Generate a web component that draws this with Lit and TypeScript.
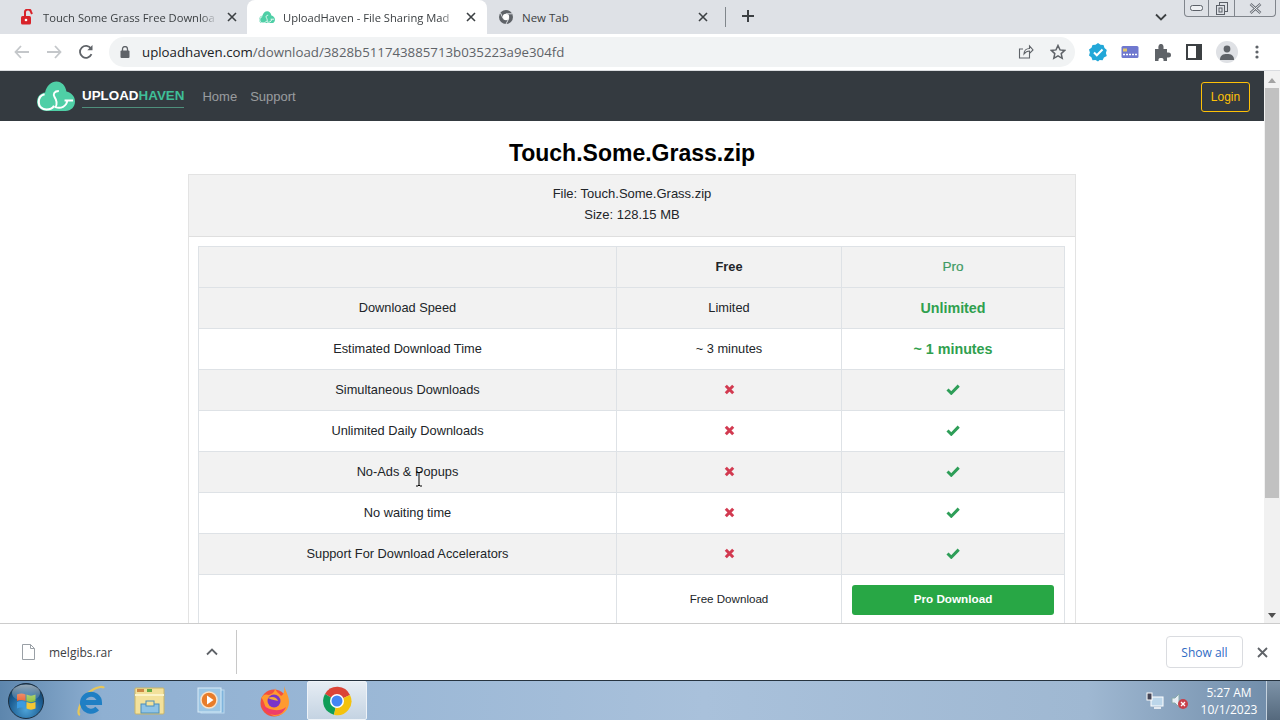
import { LitElement, html, css } from "lit";
import { customElement } from "lit/decorators.js";

const closeIcon = html`<svg width="10" height="10" viewBox="0 0 10 10"><path d="M1 1l8 8M9 1l-8 8" stroke="#3c4043" stroke-width="1.6" fill="none"/></svg>`;

const cloud = (size: number) => html`<svg width=${size} height=${size * 0.8} viewBox="0 0 40 32">
  <path fill="#4fcfa6" d="M10 31.500C4 31.500 0 27 0 22C0 16 4 12.500 8.500 12C10 5 15 .5 20.500 .5C26 .5 30 5 31 11C36 12 40 16 40 21.500C40 27 36 31.500 30 31.500Z"/>
  <path d="M8 14C3.500 15 1.800 19 1.800 22.500C1.800 27 5.500 30 10 30C14 30 16.500 28.500 18 26" stroke="#fff" stroke-width="2.300" fill="none"/>
  <path d="M23 10.500C18 10.500 16.500 14 18.500 17C20.500 20 21.500 24 19.500 27.500C25 29.500 31 27 32 20.500M29 20.500H38" stroke="#fff" stroke-width="2" fill="none"/>
</svg>`;

const xMark = html`<svg class="mark" width="11" height="11" viewBox="0 0 11 11"><path d="M1.800 1.800l7.400 7.400M9.200 1.800L1.800 9.200" stroke="#d23a50" stroke-width="3" fill="none"/></svg>`;
const checkMark = html`<svg class="mark" width="14" height="11" viewBox="0 0 14 11"><path d="M1.500 5.500l3.800 3.700L12.700 1.600" stroke="#2e9e58" stroke-width="3" fill="none"/></svg>`;

const rows: [string, boolean][] = [
  ["Simultaneous Downloads", true],
  ["Unlimited Daily Downloads", false],
  ["No-Ads & Popups", true],
  ["No waiting time", false],
  ["Support For Download Accelerators", true],
];

@customElement("browser-chrome")
export class BrowserChrome extends LitElement {
  static styles = css`
    :host { display: block; font-family: "Open Sans", "Noto Sans", sans-serif; }
    .strip { height: 34px; background: #dee1e6; display: flex; padding-left: 8px; position: relative; }
    .tab { width: 239px; height: 34px; display: flex; align-items: center; padding: 0 10px 0 12px; box-sizing: border-box; gap: 9px; font-size: 11.200px; color: #3c4043; flex: none; }
    .tab.active { background: #fff; border-radius: 8px 8px 0 0; width: 240px; padding: 0 11px 0 12px; gap: 8px; }
    .tab.plain { width: 232px; padding: 0 11px 0 11px; gap: 8px; font-size: 11.500px; }
    .title { flex: 1; white-space: nowrap; }
    .fade { -webkit-mask-image: linear-gradient(90deg, #000 90%, transparent); mask-image: linear-gradient(90deg, #000 90%, transparent); }
    .sep { width: 1px; height: 20px; background: #80868b; margin: 7px 0 0 6px; }
    .plus { margin: 9px 0 0 15px; }
    .chev { position: absolute; left: 1155px; top: 13px; }
    .winctl { position: absolute; left: 1184px; top: 0; width: 92px; height: 17px; border: 1px solid #80858c; border-top: 0; border-radius: 0 0 4px 4px; box-sizing: border-box; display: flex; }
    .winctl div { display: flex; align-items: center; justify-content: center; }
    .min { width: 23px; border-right: 1px solid #80858c; }
    .restore { width: 25px; border-right: 1px solid #80858c; }
    .shut { flex: 1; }
    .tools { height: 37px; background: #fff; border-bottom: 1px solid #dadce0; box-sizing: border-box; display: flex; align-items: center; padding-left: 13px; }
    .nav-btn { width: 32px; display: flex; justify-content: flex-start; }
    .reload { width: 23px; padding-left: 1px; box-sizing: border-box; }
    .omni { margin-left: 9px; width: 966px; height: 30px; border-radius: 15px; background: #f1f3f4; display: flex; align-items: center; padding: 0 9px 0 11px; box-sizing: border-box; font-size: 13.250px; color: #5f6368; }
    .omni b { font-weight: 400; color: #202124; }
    .url { margin-left: 12px; flex: 1; white-space: nowrap; }
    .omni svg:last-child { margin-left: 16px; }
    .exts { display: flex; align-items: center; margin-left: 13px; gap: 12px; }
    .exts > * { flex: none; }
    .avatar { width: 22px; height: 22px; border-radius: 50%; background: #dfe1e5; display: flex; align-items: center; justify-content: center; }
  `;

  render() {
    return html`
      <div class="strip">
        <div class="tab">
          <svg width="14" height="16" viewBox="0 0 14 16"><rect x="1" y="7" width="10" height="8.500" rx="1.500" fill="#d8232a"/><path d="M5 7V4a3 3 0 0 1 6 -1l1 2" stroke="#d8232a" stroke-width="2" fill="none"/><circle cx="6" cy="11" r="1.300" fill="#fff"/></svg>
          <span class="title fade">Touch Some Grass Free Downloa</span>${closeIcon}
        </div>
        <div class="tab active">
          ${cloud(16)}
          <span class="title fade">UploadHaven - File Sharing Mad</span>${closeIcon}
        </div>
        <div class="tab plain">
          <svg width="16" height="16" viewBox="0 0 16 16"><circle cx="8" cy="8" r="7" fill="#5f6368"/><circle cx="8" cy="8" r="3.200" fill="#fff"/><path d="M8 4.800h6M5.200 9.600L2.500 4M10.800 9.600L8 15" stroke="#dee1e6" stroke-width="1"/></svg>
          <span class="title">New Tab</span>${closeIcon}
        </div>
        <div class="sep"></div>
        <svg class="plus" width="14" height="14" viewBox="0 0 14 14"><path d="M7 1v12M1 7h12" stroke="#3c4043" stroke-width="2"/></svg>
        <svg class="chev" width="12" height="8" viewBox="0 0 12 8"><path d="M1 1.500l5 5 5-5" stroke="#3c4043" stroke-width="1.800" fill="none"/></svg>
        <div class="winctl">
          <div class="min"><svg width="13" height="6"><rect x=".5" y=".5" width="12" height="5" rx="2" fill="#eef0f3" stroke="#5b6068"/></svg></div>
          <div class="restore"><svg width="12" height="13"><rect x="3.500" y=".5" width="8" height="9" fill="none" stroke="#5b6068"/><rect x=".5" y="3.500" width="8" height="9" fill="#dee1e6" stroke="#5b6068"/><rect x="3" y="6" width="3" height="4" fill="none" stroke="#5b6068"/></svg></div>
          <div class="shut"><svg width="13" height="11"><path d="M1.500 1l10 9M11.500 1l-10 9" stroke="#6a6f77" stroke-width="2.600" fill="none"/><path d="M1.500 1l10 9M11.500 1l-10 9" stroke="#eef0f3" stroke-width="1" fill="none"/></svg></div>
        </div>
      </div>
      <div class="tools">
        <div class="nav-btn"><svg width="18" height="16" viewBox="0 0 18 16"><path d="M16 8H3M8 2L2.500 8 8 14" stroke="#c4c7ca" stroke-width="1.800" fill="none"/></svg></div>
        <div class="nav-btn"><svg width="18" height="16" viewBox="0 0 18 16"><path d="M2 8h13M10 2l5.500 6L10 14" stroke="#c4c7ca" stroke-width="1.800" fill="none"/></svg></div>
        <div class="nav-btn reload"><svg width="16" height="16" viewBox="0 0 16 16"><path d="M13.500 10.200A6 6 0 1 1 13 4.500" stroke="#5f6368" stroke-width="1.800" fill="none"/><path d="M14.500 1v5.200H9.300z" fill="#5f6368"/></svg></div>
        <div class="omni">
          <svg width="10" height="12" viewBox="0 0 10 12"><rect x="0.500" y="4.500" width="9" height="7.500" rx="1" fill="#5f6368"/><path d="M2.500 5V3a2.500 2.500 0 0 1 5 0v2" stroke="#5f6368" stroke-width="1.300" fill="none"/></svg>
          <span class="url"><b>uploadhaven.com</b>/download/3828b511743885713b035223a9e304fd</span>
          <svg width="16" height="16" viewBox="0 0 16 16"><path d="M11.500 9.500v4.500H1.500V5H5M6 10c0-3.500 2.500-5.500 5.500-5.500V2L15 6l-3.500 3.500V7C9 7 7.500 8 6 10z" stroke="#5f6368" stroke-width="1.100" fill="none"/></svg>
          <svg width="16" height="16" viewBox="0 0 16 16"><path d="M8 1.500l2 4.400 4.700.5-3.500 3.200 1 4.700L8 11.900l-4.200 2.400 1-4.700L1.300 6.400 6 5.900z" stroke="#5f6368" stroke-width="1.500" fill="none"/></svg>
        </div>
        <div class="exts">
          <svg width="20" height="20" viewBox="0 0 20 20"><path d="M10 1l2.500 1.800 3 .2 1 2.900 2.300 2-.9 3 .9 3-2.900 1.500-1.300 2.800-3-.3L10 19.500 7.500 18l-3 .2L3.400 15.300 1 13.500 1.900 10.500 1 7.500 3.500 5.800 4.500 3 7.500 2.800z" fill="#22a7d8"/><path d="M6 10.500l2.800 2.800L14.500 7.500" stroke="#fff" stroke-width="2" fill="none"/></svg>
          <svg width="20" height="14" viewBox="0 0 20 14"><rect width="17" height="12" x="1.500" y="1" rx="1.500" fill="#6f78cf"/><rect x="3" y="3.500" width="4" height="3" fill="#e3c76b"/><path d="M3 9.500h14" stroke="#fff" stroke-dasharray="2 1" stroke-width="1.500"/></svg>
          <svg width="20" height="18" viewBox="0 0 20 18"><path fill="#5f6368" d="M3 6h3.500C6 2 7.500 1 9 1s3 1 2.500 5H15v3.500c3.500-.5 4 1 4 2.500s-.5 3-4 2.500V18h-3.500c.5-2.500-1-3-2.500-3s-3 .5-2.500 3H3z"/></svg>
          <svg width="20" height="16" viewBox="0 0 20 16"><rect x="3" y="1" width="14" height="14" fill="#fff" stroke="#3c4043" stroke-width="2"/><rect x="12" y="1" width="5" height="14" fill="#3c4043"/></svg>
          <div class="avatar"><svg width="14" height="15" viewBox="0 0 14 15"><circle cx="7" cy="4" r="3.400" fill="#5f6368"/><path d="M0 15c0-5 3-6 7-6s7 1 7 6z" fill="#5f6368"/></svg></div>
          <svg width="14" height="16" viewBox="0 0 14 16"><circle cx="7" cy="3" r="1.600" fill="#5f6368"/><circle cx="7" cy="8" r="1.600" fill="#5f6368"/><circle cx="7" cy="13" r="1.600" fill="#5f6368"/></svg>
        </div>
      </div>
    `;
  }
}

@customElement("download-page")
export class DownloadPage extends LitElement {
  static styles = css`
    :host { display: block; height: 553px; overflow: hidden; position: relative; background: #fff; font-family: "Liberation Sans", Arial, sans-serif; color: #212529; }
    .view { width: 1264px; height: 553px; overflow: hidden; }
    nav { height: 50px; background: #343a40; display: flex; align-items: center; padding: 0 14px 0 37px; }
    .brand { display: flex; align-items: center; gap: 7px; }
    .wordmark { font-size: 13.400px; font-weight: 700; color: #fff; border-bottom: 1px solid #4f8f7c; padding: 2px 0 3px; line-height: 17px; margin-top: 2px; }
    .wordmark span { color: #3fbf98; }
    .links { display: flex; gap: 13px; margin-left: 18px; font-size: 13px; color: rgba(255,255,255,.5); }
    .login { margin: 1px 0 0 auto; width: 49px; height: 30px; box-sizing: border-box; border: 1px solid #ffc107; border-radius: 3px; color: #ffc107; font-size: 12px; display: flex; align-items: center; justify-content: center; }
    h1 { margin: 0; height: 53px; line-height: 65px; text-align: center; font-size: 23px; font-weight: 700; color: #000; }
    .card { width: 888px; margin: 0 auto; box-sizing: border-box; border: 1px solid #e3e3e3; }
    .card-head { height: 62px; background: #f2f2f2; border-bottom: 1px solid #dfdfdf; text-align: center; font-size: 13px; line-height: 21px; padding-top: 8px; box-sizing: border-box; }
    .card-body { padding: 9px; }
    table { width: 866px; border-collapse: collapse; table-layout: fixed; font-size: 12.800px; text-align: center; }
    td, th { border: 1px solid #dee2e6; height: 41px; padding: 0 0 2px; box-sizing: border-box; }
    th { font-weight: 700; }
    tr.odd { background: #f2f2f2; }
    th.pro { color: #3f9a63; font-weight: 400; font-size: 13.500px; -webkit-text-stroke: .2px #3f9a63; }
    td.strong { color: #2fa04e; font-weight: 700; font-size: 14.300px; padding-bottom: 0; }
    .mark { display: block; margin: 0 auto; }
    td.free { font-size: 11.600px; padding-bottom: 6px; }
    .btn { display: block; margin: 10px; height: 30px; line-height: 27px; border-radius: 3px; background: #28a745; color: #fff; font-weight: 700; font-size: 11.700px; }
    .bar { position: absolute; right: 0; top: 0; width: 16px; height: 553px; background: #f1f1f1; }
    .thumb { position: absolute; left: 1px; right: 1px; top: 17px; height: 410px; background: #c1c1c1; }
    .up, .down { position: absolute; left: 4px; width: 0; height: 0; border: 4px solid transparent; }
    .up { top: 3px; border-bottom: 5px solid #a3a3a3; }
    .down { bottom: 2px; border-top: 5px solid #505050; }
    .cursor { position: absolute; left: 415px; top: 400px; }
  `;

  render() {
    return html`
      <div class="view">
        <nav>
          <div class="brand">${cloud(38)}<div class="wordmark">UPLOAD<span>HAVEN</span></div></div>
          <div class="links"><span>Home</span><span>Support</span></div>
          <div class="login">Login</div>
        </nav>
        <h1>Touch.Some.Grass.zip</h1>
        <div class="card">
          <div class="card-head">File: Touch.Some.Grass.zip<br />Size: 128.15 MB</div>
          <div class="card-body">
            <table>
              <colgroup><col style="width:418px" /><col style="width:225px" /><col style="width:223px" /></colgroup>
              <tr class="odd"><th></th><th>Free</th><th class="pro">Pro</th></tr>
              <tr class="odd"><td>Download Speed</td><td>Limited</td><td class="strong">Unlimited</td></tr>
              <tr><td>Estimated Download Time</td><td>~ 3 minutes</td><td class="strong">~ 1 minutes</td></tr>
              ${rows.map(
                ([label, odd]) => html`<tr class=${odd ? "odd" : ""}><td>${label}</td><td>${xMark}</td><td>${checkMark}</td></tr>`
              )}
              <tr><td></td><td class="free">Free Download</td><td><span class="btn">Pro Download</span></td></tr>
            </table>
          </div>
        </div>
      </div>
      <div class="bar"><div class="up"></div><div class="thumb"></div><div class="down"></div></div>
      <svg class="cursor" width="8" height="16" viewBox="0 0 8 16"><path d="M1 1h2l1 1 1-1h2M4 2v12M1 15h2l1-1 1 1h2" stroke="#000" stroke-width="1" fill="none"/></svg>
    `;
  }
}

@customElement("download-shelf")
export class DownloadShelf extends LitElement {
  static styles = css`
    :host { display: flex; height: 57px; background: #fff; border-top: 1px solid #ccc; box-sizing: border-box; align-items: center; font-family: "Open Sans", "Noto Sans", sans-serif; }
    .file { margin-left: 22px; }
    .name { margin-left: 14px; width: 157px; font-size: 12px; color: #3c4043; }
    .sep { width: 1px; height: 44px; background: #c8c8c8; margin-left: 18px; }
    .show { margin-left: auto; width: 77px; height: 32px; box-sizing: border-box; border: 1px solid #dadce0; border-radius: 4px; color: #2f6bc4; font-size: 12px; display: flex; align-items: center; justify-content: center; }
    .close { margin: 0 12px 0 14px; }
  `;

  render() {
    return html`
      <svg class="file" width="13" height="16" viewBox="0 0 13 16"><path d="M.5.5h8l4 4v11H.5z" fill="#fff" stroke="#9aa0a6"/><path d="M8.500.5v4h4" fill="none" stroke="#9aa0a6"/></svg>
      <span class="name">melgibs.rar</span>
      <svg width="12" height="8" viewBox="0 0 12 8"><path d="M1 6.500l5-5 5 5" stroke="#5f6368" stroke-width="1.800" fill="none"/></svg>
      <div class="sep"></div>
      <div class="show">Show all</div>
      <svg class="close" width="11" height="11" viewBox="0 0 11 11"><path d="M1 1l9 9M10 1l-9 9" stroke="#5f6368" stroke-width="1.800"/></svg>
    `;
  }
}

@customElement("win-taskbar")
export class WinTaskbar extends LitElement {
  static styles = css`
    :host { display: flex; height: 40px; box-sizing: border-box; border-top: 1px solid #26333f; background: linear-gradient(90deg, #5d86ad 0, #8fb0d2 8%, #a9c1db 55%, #9fb8d2 85%, #6f8ba8 100%); align-items: center; font-family: "Open Sans", "Noto Sans", sans-serif; position: relative; }
    .slot { position: absolute; top: 0; height: 39px; display: flex; align-items: center; justify-content: center; }
    .start { left: 0; width: 52px; }
    .ie { left: 70px; width: 40px; }
    .explorer { left: 130px; width: 40px; }
    .wmp { left: 191px; width: 40px; }
    .firefox { left: 254px; width: 40px; }
    .active { left: 307px; width: 60px; background: linear-gradient(#e6edf4, #c4d3e2); border: 1px solid #eef3f8; border-radius: 2px; box-sizing: border-box; }
    .net { left: 1146px; width: 18px; }
    .vol { left: 1171px; width: 18px; }
    .clock { position: absolute; left: 1196px; width: 66px; top: 3px; color: #fff; font-size: 12px; line-height: 17px; text-align: center; }
    .desk { position: absolute; right: 0; top: 0; width: 14px; height: 39px; background: linear-gradient(#7d93a8, #55697d); border-left: 1px solid #c5d2de; box-sizing: border-box; }
  `;

  render() {
    return html`
      <div class="slot start">
        <svg width="36" height="36" viewBox="0 0 36 36">
          <defs>
            <radialGradient id="orb" cx=".5" cy=".75" r=".8"><stop offset="0" stop-color="#4da3d8"/><stop offset=".6" stop-color="#1c5d92"/><stop offset="1" stop-color="#123049"/></radialGradient>
            <linearGradient id="gloss" x1="0" y1="0" x2="0" y2="1"><stop offset="0" stop-color="#fff" stop-opacity=".55"/><stop offset="1" stop-color="#fff" stop-opacity=".05"/></linearGradient>
          </defs>
          <circle cx="18" cy="18" r="17.500" fill="url(#orb)" stroke="#1d2f40"/>
          <path d="M9 11.500c3-1.500 6-1.500 8.500 0v6.500c-2.500-1.500-5.500-1.500-8.500 0z" fill="#e8602f"/>
          <path d="M18.500 11.500c3 1.500 6 1.500 9 0V18c-3 1.500-6 1.500-9 0z" fill="#8fc13f"/>
          <path d="M9 19c3-1.500 6-1.500 8.500 0v6.500c-2.500-1.500-5.500-1.500-8.500 0z" fill="#3c9ae0"/>
          <path d="M18.500 19c3 1.500 6 1.500 9 0v6.500c-3 1.500-6 1.500-9 0z" fill="#f5c733"/>
          <ellipse cx="18" cy="10" rx="14" ry="8.500" fill="url(#gloss)"/>
        </svg>
      </div>
      <div class="slot ie">
        <svg width="32" height="32" viewBox="0 0 32 32"><path d="M6 30C1 28 9 10 20 4c4-2 9-3 10-1" stroke="#e6c65a" stroke-width="2.200" fill="none"/><path d="M9.500 17.500h16a8.500 8.500 0 1 0-2.300 6" stroke="#1f7fc4" stroke-width="5" fill="none"/></svg>
      </div>
      <div class="slot explorer">
        <svg width="32" height="30" viewBox="0 0 32 30"><rect x="1" y="2" width="29" height="26" rx="1" fill="#f3e19b" stroke="#c8b469"/><rect x="3" y="3" width="7" height="3" fill="#c84"/><rect x="13" y="3" width="5" height="3" fill="#6a4"/><rect x="1" y="8" width="29" height="2" fill="#fbf3c8"/><rect x="7" y="18" width="18" height="9" fill="#8fc3e6" stroke="#4b8ebb"/><rect x="12" y="15" width="8" height="5" fill="#f3e19b" stroke="#4b8ebb"/></svg>
      </div>
      <div class="slot wmp">
        <svg width="28" height="28" viewBox="0 0 28 28"><rect x="4" y="3" width="23" height="23" fill="#7fb4dc" stroke="#bcd9ee"/><rect x="1" y="1" width="23" height="24" fill="#9cc6e4" stroke="#d9ecf7"/><circle cx="12" cy="13" r="8" fill="#e87d2a" stroke="#fbe3c8" stroke-width="1.500"/><path d="M10 8.500l6.500 4.500-6.500 4.500z" fill="#fff"/></svg>
      </div>
      <div class="slot firefox">
        <svg width="32" height="32" viewBox="0 0 32 32"><circle cx="16" cy="18" r="13.500" fill="#f2503f"/><path d="M3 12C8 18 6 27 16 31c9 0 15-6 15-14 0-6-3-10-5-16 1 7-1 9-3 10-2-3-5-4-6-8 0 4-3 6-6 7-3-1-5-1-7 2z" fill="#ff9a2e"/><path d="M5 20c1 6 6 10 12 10 5 0 9-3 11-8-6 5-16 4-23-2z" fill="#ef3d6a"/><circle cx="16" cy="16" r="6.500" fill="#7a35c8"/><path d="M10 13c4-2 9-1 10 3-2-1-6-1-10-3z" fill="#f2a93a"/></svg>
      </div>
      <div class="slot active">
        <svg width="32" height="32" viewBox="0 0 32 32"><path d="M16 16L4 9A14 14 0 0 1 29 10z" fill="#db4437"/><path d="M16 16L4 9A14 14 0 0 0 13 29.700z" fill="#0f9d58"/><path d="M16 16l13-6a14 14 0 0 1-16 19.700z" fill="#f4c20d"/><circle cx="16" cy="16" r="7" fill="#fff"/><circle cx="16" cy="16" r="5.500" fill="#4285f4"/></svg>
      </div>
      <div class="slot net">
        <svg width="18" height="18" viewBox="0 0 18 18"><rect x="5" y="5" width="12" height="9" fill="#bcd6ea" stroke="#fff"/><path d="M8 16h7" stroke="#fff" stroke-width="1.500"/><rect x="1" y="1" width="5" height="7" fill="#445" stroke="#fff"/></svg>
      </div>
      <div class="slot vol">
        <svg width="18" height="18" viewBox="0 0 18 18"><path d="M1 6h3l4-4v13l-4-4H1z" fill="#e8eef4" stroke="#8aa"/><circle cx="12" cy="12" r="5" fill="#c8404a"/><path d="M10 10l4 4M14 10l-4 4" stroke="#fff" stroke-width="1.300"/></svg>
      </div>
      <div class="clock">5:27 AM<br />10/1/2023</div>
      <div class="desk"></div>
    `;
  }
}

@customElement("app-root")
export class AppRoot extends LitElement {
  static styles = css`
    :host { display: flex; flex-direction: column; width: 1280px; height: 720px; overflow: hidden; background: #fff; }
  `;

  render() {
    return html`
      <browser-chrome></browser-chrome>
      <download-page></download-page>
      <download-shelf></download-shelf>
      <win-taskbar></win-taskbar>
    `;
  }
}
